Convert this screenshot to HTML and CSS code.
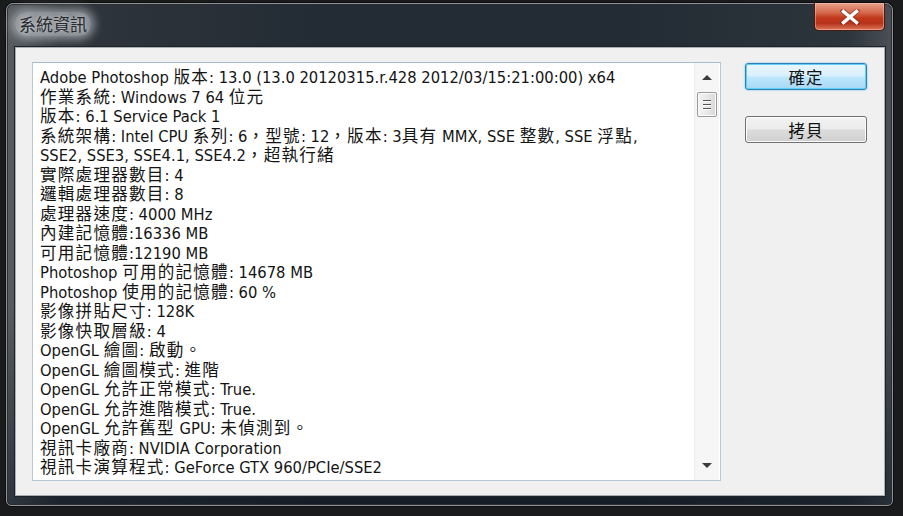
FILE: index.html
```html
<!DOCTYPE html>
<html lang="zh-Hant">
<head>
<meta charset="utf-8">
<title>系統資訊</title>
<link rel="stylesheet" href="styles.css">
</head>
<body>
<div class="window">
  <div class="titlebar">
    <div class="title">系統資訊</div>
    <div class="close">
      <svg width="20" height="16" viewBox="0 0 20 16"><path d="M3 2 L17 14 M17 2 L3 14" stroke="#5a2416" stroke-width="5" stroke-linecap="square" fill="none" opacity="0.5"/><path d="M3.5 2.5 L16.5 13.5 M16.5 2.5 L3.5 13.5" stroke="#ffffff" stroke-width="3.4" stroke-linecap="square" fill="none"/></svg>
    </div>
  </div>
  <div class="client">
    <div class="textbox">
      <div class="text">
        <div class="line">Adobe Photoshop <span class="c">版本</span>: 13.0 (13.0 20120315.r.428 2012/03/15:21:00:00) x64</div>
        <div class="line"><span class="c">作業系統</span>: Windows 7 64 <span class="c">位元</span></div>
        <div class="line"><span class="c">版本</span>: 6.1 Service Pack 1</div>
        <div class="line"><span class="c">系統架構</span>: Intel CPU <span class="c">系列</span>: 6<span class="c">，型號</span>: 12<span class="c">，版本</span>: 3<span class="c">具有</span> MMX, SSE <span class="c">整數</span>, SSE <span class="c">浮點</span>,</div>
        <div class="line">SSE2, SSE3, SSE4.1, SSE4.2<span class="c">，超執行緒</span></div>
        <div class="line"><span class="c">實際處理器數目</span>: 4</div>
        <div class="line"><span class="c">邏輯處理器數目</span>: 8</div>
        <div class="line"><span class="c">處理器速度</span>: 4000 MHz</div>
        <div class="line"><span class="c">內建記憶體</span>:16336 MB</div>
        <div class="line"><span class="c">可用記憶體</span>:12190 MB</div>
        <div class="line">Photoshop <span class="c">可用的記憶體</span>: 14678 MB</div>
        <div class="line">Photoshop <span class="c">使用的記憶體</span>: 60 %</div>
        <div class="line"><span class="c">影像拼貼尺寸</span>: 128K</div>
        <div class="line"><span class="c">影像快取層級</span>: 4</div>
        <div class="line">OpenGL <span class="c">繪圖</span>: <span class="c">啟動。</span></div>
        <div class="line">OpenGL <span class="c">繪圖模式</span>: <span class="c">進階</span></div>
        <div class="line">OpenGL <span class="c">允許正常模式</span>: True.</div>
        <div class="line">OpenGL <span class="c">允許進階模式</span>: True.</div>
        <div class="line">OpenGL <span class="c">允許舊型</span> GPU: <span class="c">未偵測到。</span></div>
        <div class="line"><span class="c">視訊卡廠商</span>: NVIDIA Corporation</div>
        <div class="line"><span class="c">視訊卡演算程式</span>: GeForce GTX 960/PCIe/SSE2</div>
      </div>
      <div class="scrollbar">
        <div class="sb-btn"><span class="arrow-up"></span></div>
        <div class="thumb"><span></span><span></span><span></span></div>
        <div class="sb-track"></div>
        <div class="sb-btn"><span class="arrow-down"></span></div>
      </div>
    </div>
    <div class="buttons">
      <div class="btn default"><span>確定</span></div>
      <div class="btn"><span>拷貝</span></div>
    </div>
  </div>
</div>
</body>
</html>
```

FILE: styles.css
```css
html, body {
  margin: 0;
  padding: 0;
}
body {
  width: 903px;
  height: 516px;
  background: #1a1b1c;
  overflow: hidden;
  font-family: "DejaVu Sans Condensed", "DejaVu Sans", "Noto Sans CJK TC", sans-serif;
}
.window {
  margin: 3px 0 0 6px;
  width: 887px;
  height: 503px;
  box-sizing: border-box;
  border: 1px solid #8e9296;
  border-radius: 7px 7px 5px 5px;
  background:
    linear-gradient(180deg, rgba(0,0,0,0) 0%, rgba(0,0,0,0) 60%, rgba(10,20,30,0.55) 100%),
    linear-gradient(90deg, #5a5f64 0%, #2f363d 6%, #232b34 35%, #232b34 70%, #2c343c 95%, #4a5056 100%);
  box-shadow: inset 0 0 0 1px #2a2e33, 0 0 0 1px #0c0d0e;
  display: flex;
  flex-direction: column;
  padding: 0 7px 9px 8px;
}
.titlebar {
  height: 41px;
  display: flex;
  justify-content: space-between;
  align-items: flex-start;
  flex: none;
}
.title {
  font-family: "Noto Sans CJK TC", sans-serif;
  font-size: 17px;
  color: #262a2e;
  margin: 8px 0 0 0;
  padding: 0 4px;
  border-radius: 12px;
  background: rgba(205,210,214,0.55);
  box-shadow: 0 0 8px 4px rgba(205,210,214,0.55);
  text-shadow: 0 0 5px rgba(255,255,255,0.8);
  line-height: 24px;
}
.close {
  width: 71px;
  height: 28px;
  margin-top: -1px;
  box-sizing: border-box;
  border: 1px solid #4a1b12;
  border-top: none;
  border-radius: 0 0 5px 5px;
  background: linear-gradient(180deg, #e8a08a 0%, #d56a4f 35%, #c2391c 55%, #b8321a 75%, #d9785c 100%);
  box-shadow: inset 0 0 0 1px rgba(255,210,190,0.45);
  display: flex;
  align-items: center;
  justify-content: center;
}
.client {
  flex: 1;
  background: #f0f0f0;
  border: 1px solid #a9aeb3;
  box-shadow: 0 0 0 1px #1d2329;
  display: flex;
  gap: 24px;
  padding: 14px 17px 14px 16px;
  margin-top: 2px;
}
.textbox {
  width: 689px;
  height: 419px;
  box-sizing: border-box;
  border: 1px solid #b7c7d8;
  border-top-color: #a8bbd0;
  background: #ffffff;
  display: flex;
  flex: none;
}
.text {
  flex: 1;
  padding: 4px 0 0 7px;
  color: #141414;
  font-size: 16.4px;
  line-height: 19.5px;
  white-space: nowrap;
  overflow: hidden;
}
.line {
  height: 19.5px;
}
.c {
  display: inline-block;
  height: 19.5px;
  font-family: "Noto Sans CJK TC", sans-serif;
  font-size: 16.6px;
  letter-spacing: 1.2px;
  line-height: 19.5px;
}
.scrollbar {
  width: 24px;
  margin: 0 1px 0 0;
  background: #f6f6f6;
  border-left: 1px solid #ececec;
  display: flex;
  flex-direction: column;
  align-items: center;
}
.sb-btn {
  height: 29px;
  width: 100%;
  display: flex;
  align-items: center;
  justify-content: center;
  flex: none;
}
.arrow-up {
  width: 0;
  height: 0;
  border-left: 5px solid transparent;
  border-right: 5px solid transparent;
  border-bottom: 5px solid #3c3c3c;
}
.arrow-down {
  width: 0;
  height: 0;
  border-left: 5px solid transparent;
  border-right: 5px solid transparent;
  border-top: 5px solid #3c3c3c;
}
.thumb {
  width: 20px;
  height: 25px;
  box-sizing: border-box;
  border: 1px solid #9a9a9a;
  border-radius: 2px;
  background: linear-gradient(90deg, #f4f4f4 0%, #e8e8e8 50%, #d8d8d8 100%);
  box-shadow: inset 0 0 0 1px #fbfbfb;
  display: flex;
  flex-direction: column;
  align-items: center;
  justify-content: center;
  gap: 2px;
  flex: none;
}
.thumb span {
  display: block;
  width: 8px;
  height: 1px;
  background: #555;
  border-bottom: 1px solid #ffffff;
}
.sb-track {
  flex: 1;
}
.buttons {
  display: flex;
  flex-direction: column;
  gap: 26px;
  padding-top: 1px;
}
.btn {
  width: 122px;
  height: 27px;
  box-sizing: border-box;
  border: 1px solid #707070;
  border-radius: 3px;
  background: linear-gradient(180deg, #f3f3f3 0%, #ebebeb 48%, #dcdcdc 52%, #d0d0d0 100%);
  box-shadow: inset 0 0 0 1px #fcfcfc;
  display: flex;
  align-items: center;
  justify-content: center;
  font-family: "Noto Sans CJK TC", sans-serif;
  font-size: 16.5px;
  color: #111;
}
.btn span {
  letter-spacing: 1px;
  line-height: 20px;
}
.btn.default {
  border-color: #2f7fb6;
  background: linear-gradient(180deg, #eaf6fd 0%, #d9f0fc 48%, #bee6fd 52%, #a7d9f5 100%);
  box-shadow: inset 0 0 0 1px #5fd1f7, 0 0 2px #54c0ec;
}
```
